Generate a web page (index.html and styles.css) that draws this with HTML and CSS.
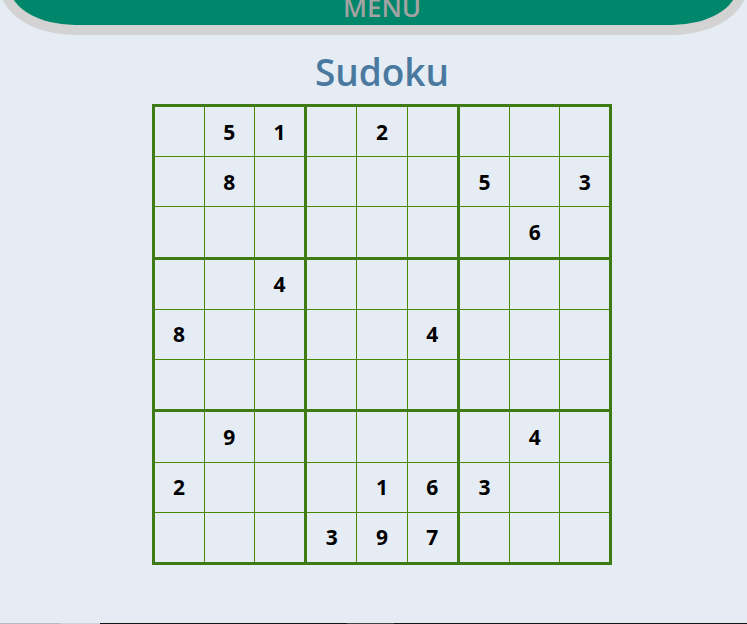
FILE: index.html
```html
<!DOCTYPE html>
<html lang="en">
<head>
<meta charset="utf-8">
<title>Sudoku</title>
<link rel="stylesheet" href="styles.css">
</head>
<body>
<header class="menu"><span class="menu-label">MENU</span></header>
<main class="page">
  <h1 class="title">Sudoku</h1>
  <div class="board">
    <div class="box">
      <div class="cell"></div><div class="cell">5</div><div class="cell">1</div>
      <div class="cell"></div><div class="cell">8</div><div class="cell"></div>
      <div class="cell"></div><div class="cell"></div><div class="cell"></div>
    </div>
    <div class="box">
      <div class="cell"></div><div class="cell">2</div><div class="cell"></div>
      <div class="cell"></div><div class="cell"></div><div class="cell"></div>
      <div class="cell"></div><div class="cell"></div><div class="cell"></div>
    </div>
    <div class="box">
      <div class="cell"></div><div class="cell"></div><div class="cell"></div>
      <div class="cell">5</div><div class="cell"></div><div class="cell">3</div>
      <div class="cell"></div><div class="cell">6</div><div class="cell"></div>
    </div>
    <div class="box">
      <div class="cell"></div><div class="cell"></div><div class="cell">4</div>
      <div class="cell">8</div><div class="cell"></div><div class="cell"></div>
      <div class="cell"></div><div class="cell"></div><div class="cell"></div>
    </div>
    <div class="box">
      <div class="cell"></div><div class="cell"></div><div class="cell"></div>
      <div class="cell"></div><div class="cell"></div><div class="cell">4</div>
      <div class="cell"></div><div class="cell"></div><div class="cell"></div>
    </div>
    <div class="box">
      <div class="cell"></div><div class="cell"></div><div class="cell"></div>
      <div class="cell"></div><div class="cell"></div><div class="cell"></div>
      <div class="cell"></div><div class="cell"></div><div class="cell"></div>
    </div>
    <div class="box">
      <div class="cell"></div><div class="cell">9</div><div class="cell"></div>
      <div class="cell">2</div><div class="cell"></div><div class="cell"></div>
      <div class="cell"></div><div class="cell"></div><div class="cell"></div>
    </div>
    <div class="box">
      <div class="cell"></div><div class="cell"></div><div class="cell"></div>
      <div class="cell"></div><div class="cell">1</div><div class="cell">6</div>
      <div class="cell">3</div><div class="cell">9</div><div class="cell">7</div>
    </div>
    <div class="box">
      <div class="cell"></div><div class="cell">4</div><div class="cell"></div>
      <div class="cell">3</div><div class="cell"></div><div class="cell"></div>
      <div class="cell"></div><div class="cell"></div><div class="cell"></div>
    </div>
  </div>
</main>
<footer class="footer">
  <div class="seg seg-a"></div>
  <div class="seg seg-b"></div>
  <div class="seg seg-c"></div>
  <div class="seg seg-d"></div>
  <div class="seg seg-e"></div>
</footer>
</body>
</html>
```
FILE: styles.css
```css
html, body {
  margin: 0;
  padding: 0;
}
body {
  background: #e5ecf4;
  font-family: "Open Sans", "Liberation Sans", sans-serif;
  overflow: hidden;
}
.menu {
  box-sizing: border-box;
  margin-top: -40px;
  height: 75px;
  background: #00866a;
  border: 10px solid #d3d3d3;
  border-top: none;
  border-radius: 0 0 75px 75px / 0 0 48px 48px;
  display: flex;
  justify-content: center;
  align-items: flex-end;
  padding-bottom: 6px;
  padding-left: 17px;
}
.menu-label {
  font-size: 26px;
  line-height: 24px;
  font-weight: 600;
  color: #a3a3a3;
}
.page {
  display: flex;
  flex-direction: column;
  align-items: center;
  padding-left: 17px;
}
.title {
  margin: 15px 0 10px;
  font-size: 37px;
  line-height: 44px;
  font-weight: 600;
  color: #4a79a0;
}
.board {
  display: grid;
  grid-template-columns: repeat(3, auto);
  gap: 3px;
  padding: 3px;
  background: #3f7b15;
}
.box {
  display: grid;
  grid-template-columns: repeat(3, 49.22px);
  grid-auto-rows: 49.22px;
  gap: 1px;
  background: #4b8700;
}
.cell {
  background: #e5ecf4;
  display: flex;
  align-items: center;
  justify-content: center;
  font-size: 21px;
  font-weight: 700;
  color: #000;
}
.footer {
  margin-top: 58px;
  height: 1px;
  display: flex;
}
.seg { height: 1px; }
.seg-a { width: 60px; background: #b8bcc0; }
.seg-b { width: 40px; background: #d0d4d8; }
.seg-c { width: 247px; background: #151515; }
.seg-d { width: 47px; background: #444444; }
.seg-e { flex: 1; background: #151515; }
```
